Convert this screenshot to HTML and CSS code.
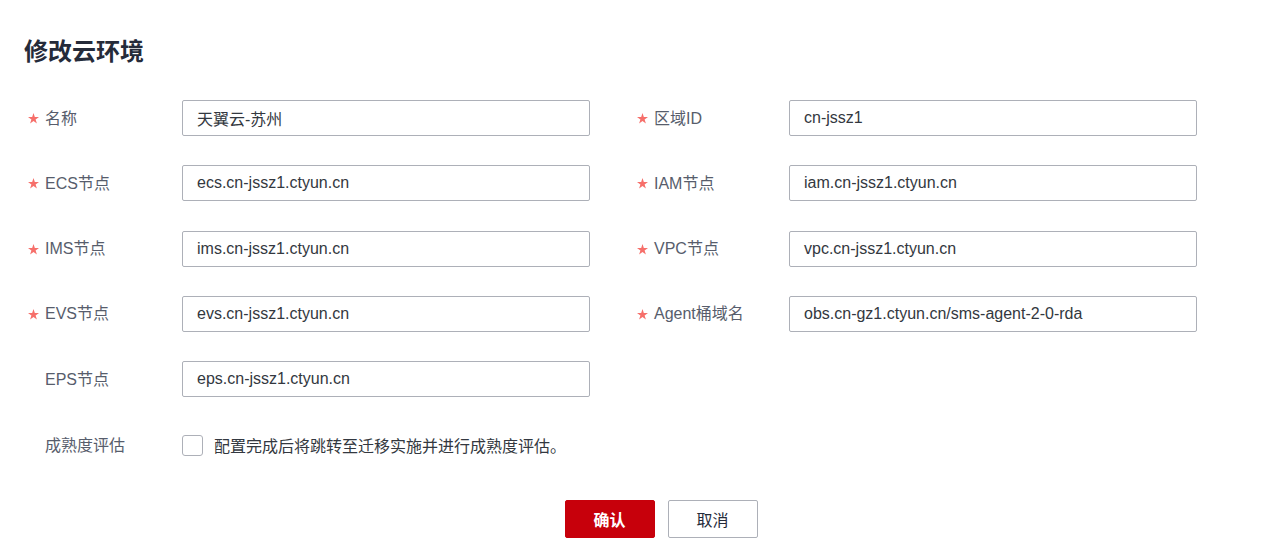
FILE: index.html
```html
<!DOCTYPE html>
<html lang="zh-CN">
<head>
<meta charset="utf-8">
<title>修改云环境</title>
<link rel="stylesheet" href="styles.css">
</head>
<body>
<div class="page">
  <h1 class="title">修改云环境</h1>
  <div class="form">
    <div class="field">
      <div class="label"><svg class="star" viewBox="0 0 10 10"><polygon points="5,0 6.2,3.6 10,3.6 6.9,5.9 8.1,9.6 5,7.3 1.9,9.6 3.1,5.9 0,3.6 3.8,3.6"/></svg><span>名称</span></div>
      <div class="input">天翼云-苏州</div>
    </div>
    <div class="field right">
      <div class="label"><svg class="star" viewBox="0 0 10 10"><polygon points="5,0 6.2,3.6 10,3.6 6.9,5.9 8.1,9.6 5,7.3 1.9,9.6 3.1,5.9 0,3.6 3.8,3.6"/></svg><span>区域ID</span></div>
      <div class="input">cn-jssz1</div>
    </div>
    <div class="field">
      <div class="label"><svg class="star" viewBox="0 0 10 10"><polygon points="5,0 6.2,3.6 10,3.6 6.9,5.9 8.1,9.6 5,7.3 1.9,9.6 3.1,5.9 0,3.6 3.8,3.6"/></svg><span>ECS节点</span></div>
      <div class="input">ecs.cn-jssz1.ctyun.cn</div>
    </div>
    <div class="field right">
      <div class="label"><svg class="star" viewBox="0 0 10 10"><polygon points="5,0 6.2,3.6 10,3.6 6.9,5.9 8.1,9.6 5,7.3 1.9,9.6 3.1,5.9 0,3.6 3.8,3.6"/></svg><span>IAM节点</span></div>
      <div class="input">iam.cn-jssz1.ctyun.cn</div>
    </div>
    <div class="field">
      <div class="label"><svg class="star" viewBox="0 0 10 10"><polygon points="5,0 6.2,3.6 10,3.6 6.9,5.9 8.1,9.6 5,7.3 1.9,9.6 3.1,5.9 0,3.6 3.8,3.6"/></svg><span>IMS节点</span></div>
      <div class="input">ims.cn-jssz1.ctyun.cn</div>
    </div>
    <div class="field right">
      <div class="label"><svg class="star" viewBox="0 0 10 10"><polygon points="5,0 6.2,3.6 10,3.6 6.9,5.9 8.1,9.6 5,7.3 1.9,9.6 3.1,5.9 0,3.6 3.8,3.6"/></svg><span>VPC节点</span></div>
      <div class="input">vpc.cn-jssz1.ctyun.cn</div>
    </div>
    <div class="field">
      <div class="label"><svg class="star" viewBox="0 0 10 10"><polygon points="5,0 6.2,3.6 10,3.6 6.9,5.9 8.1,9.6 5,7.3 1.9,9.6 3.1,5.9 0,3.6 3.8,3.6"/></svg><span>EVS节点</span></div>
      <div class="input">evs.cn-jssz1.ctyun.cn</div>
    </div>
    <div class="field right">
      <div class="label"><svg class="star" viewBox="0 0 10 10"><polygon points="5,0 6.2,3.6 10,3.6 6.9,5.9 8.1,9.6 5,7.3 1.9,9.6 3.1,5.9 0,3.6 3.8,3.6"/></svg><span>Agent桶域名</span></div>
      <div class="input">obs.cn-gz1.ctyun.cn/sms-agent-2-0-rda</div>
    </div>
    <div class="field">
      <div class="label"><span class="nostar"></span><span>EPS节点</span></div>
      <div class="input">eps.cn-jssz1.ctyun.cn</div>
    </div>
    <div class="field empty"></div>
    <div class="field wide">
      <div class="label"><span class="nostar"></span><span>成熟度评估</span></div>
      <div class="check-wrap">
        <span class="checkbox"></span>
        <span class="check-text">配置完成后将跳转至迁移实施并进行成熟度评估。</span>
      </div>
    </div>
  </div>
  <div class="actions">
    <button class="btn primary">确认</button>
    <button class="btn">取消</button>
  </div>
</div>
</body>
</html>
```
FILE: styles.css
```css
* { box-sizing: border-box; }
html, body {
  margin: 0;
  padding: 0;
  background: #ffffff;
}
body {
  font-family: "Liberation Sans", "Noto Sans CJK SC", sans-serif;
  font-size: 16px;
  color: #252b3a;
}
.page {
  padding: 34px 0 0 24px;
}
.title {
  margin: 0;
  font-size: 24px;
  line-height: 32px;
  font-weight: 700;
  color: #252b3a;
  font-family: "Noto Sans CJK SC", sans-serif;
}
.form {
  margin-top: 34px;
  display: grid;
  grid-template-columns: 566px 566px;
  column-gap: 41px;
  row-gap: 29.3px;
}
.field {
  display: flex;
  align-items: center;
  height: 36px;
}
.field.wide {
  grid-column: 1 / -1;
  margin-top: 1px;
}
.label {
  flex: none;
  width: 158px;
  padding-left: 4px;
  padding-top: 1px;
  display: flex;
  align-items: center;
  gap: 6px;
  color: #575d6c;
  line-height: 20px;
}
.field.right .label {
  padding-left: 6px;
}
.star {
  width: 11px;
  height: 11px;
  fill: #f66f6a;
  flex: none;
}
.nostar {
  width: 11px;
  height: 11px;
  flex: none;
}
.input {
  flex: 1;
  height: 36px;
  border: 1px solid #adb0b8;
  border-radius: 2px;
  padding: 0 14px;
  display: flex;
  align-items: center;
  color: #333840;
  white-space: nowrap;
}
.check-wrap {
  display: flex;
  align-items: center;
  gap: 11px;
}
.checkbox {
  width: 21px;
  height: 21px;
  border: 1px solid #adb0b8;
  border-radius: 3px;
  background: #fff;
}
.check-text {
  color: #333840;
}
.actions {
  margin-top: 37px;
  display: flex;
  justify-content: center;
  gap: 13px;
  padding-left: 18px;
}
.btn {
  width: 90px;
  height: 38px;
  border: 1px solid #adb0b8;
  border-radius: 2px;
  background: #ffffff;
  color: #252b3a;
  font-family: "Liberation Sans", "Noto Sans CJK SC", sans-serif;
  font-size: 16px;
  padding: 0;
}
.btn.primary {
  background: #c7000b;
  border-color: #c7000b;
  color: #ffffff;
  font-weight: 700;
}
```
